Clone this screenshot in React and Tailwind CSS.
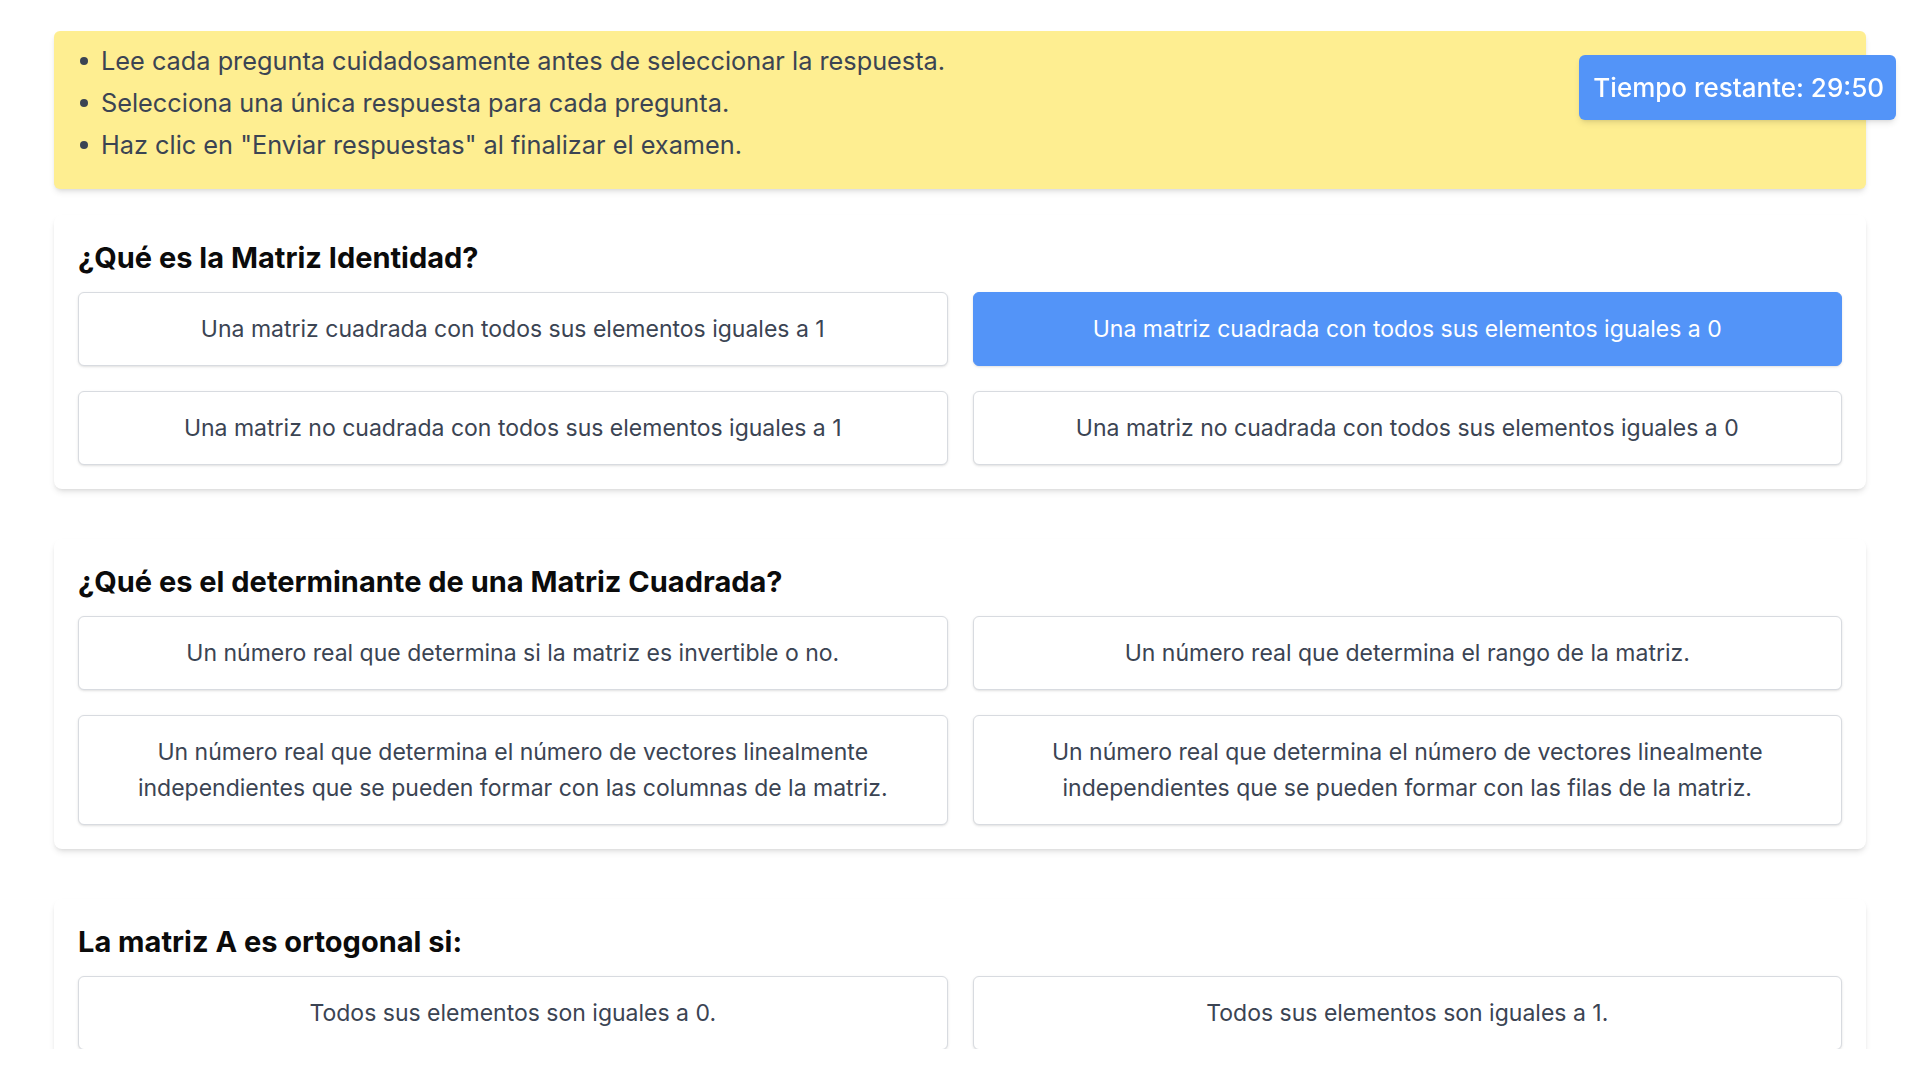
const QUESTIONS = [
  {
    id: 1,
    title: '¿Qué es la Matriz Identidad?',
    options: [
      'Una matriz cuadrada con todos sus elementos iguales a 1',
      'Una matriz cuadrada con todos sus elementos iguales a 0',
      'Una matriz no cuadrada con todos sus elementos iguales a 1',
      'Una matriz no cuadrada con todos sus elementos iguales a 0',
    ],
    selected: 1,
  },
  {
    id: 2,
    title: '¿Qué es el determinante de una Matriz Cuadrada?',
    options: [
      'Un número real que determina si la matriz es invertible o no.',
      'Un número real que determina el rango de la matriz.',
      'Un número real que determina el número de vectores linealmente independientes que se pueden formar con las columnas de la matriz.',
      'Un número real que determina el número de vectores linealmente independientes que se pueden formar con las filas de la matriz.',
    ],
    selected: null,
  },
  {
    id: 3,
    title: 'La matriz A es ortogonal si:',
    options: [
      'Todos sus elementos son iguales a 0.',
      'Todos sus elementos son iguales a 1.',
      'Su transpuesta es igual a su inversa.',
      'Su determinante es igual a 0.',
    ],
    selected: null,
  },
]

const RULES = [
  'Lee cada pregunta cuidadosamente antes de seleccionar la respuesta.',
  'Selecciona una única respuesta para cada pregunta.',
  'Haz clic en "Enviar respuestas" al finalizar el examen.',
]

function Question({ q }) {
  return (
    <div className="bg-white rounded-lg shadow-md px-6 pt-[25px] pb-6 mb-[50px]">
      <h2 className="text-[29px] leading-[36px] font-bold text-[#0b0b0b] mb-4">{q.title}</h2>
      <div className="grid grid-cols-2 gap-[25px]">
        {q.options.map((opt, i) => (
          <button
            key={i}
            className={`rounded-md border px-6 py-[18px] text-[23px] leading-[36px] text-center shadow-sm ${
              q.selected === i
                ? 'bg-[#5394f8] border-[#5394f8] text-white'
                : 'bg-white border-[#d8dbe0] text-[#3b4453]'
            }`}
          >
            {opt}
          </button>
        ))}
      </div>
    </div>
  )
}

export default function App() {
  return (
    <div className="w-full h-[1080px] bg-white font-['Inter',sans-serif] overflow-hidden">
      <div className="h-[1049px] overflow-hidden pt-[31px]">
        <div className="w-[1812px] ml-[54px]">
          {/* Instructions */}
          <div className="bg-[#feee91] rounded-md shadow-md pt-[9px] pb-[23px] pl-[26px] mb-[26px]">
            <ul className="text-[25.3px] leading-[42px] text-[#3b4453]">
              {RULES.map((r) => (
                <li key={r} className="flex items-center">
                  <span className="w-[8px] h-[8px] rounded-full bg-[#3b4453] mr-[13px] shrink-0" />
                  <span>{r}</span>
                </li>
              ))}
            </ul>
          </div>

          {QUESTIONS.map((q) => (
            <Question key={q.id} q={q} />
          ))}
        </div>
      </div>

      {/* Timer */}
      <div className="fixed top-[55px] right-[24px] bg-[#5394f8] text-white rounded-md shadow-md pl-[14px] pr-[12px] py-[14px] text-[26px] leading-[37px] font-medium">
        Tiempo restante: 29:50
      </div>
    </div>
  )
}
